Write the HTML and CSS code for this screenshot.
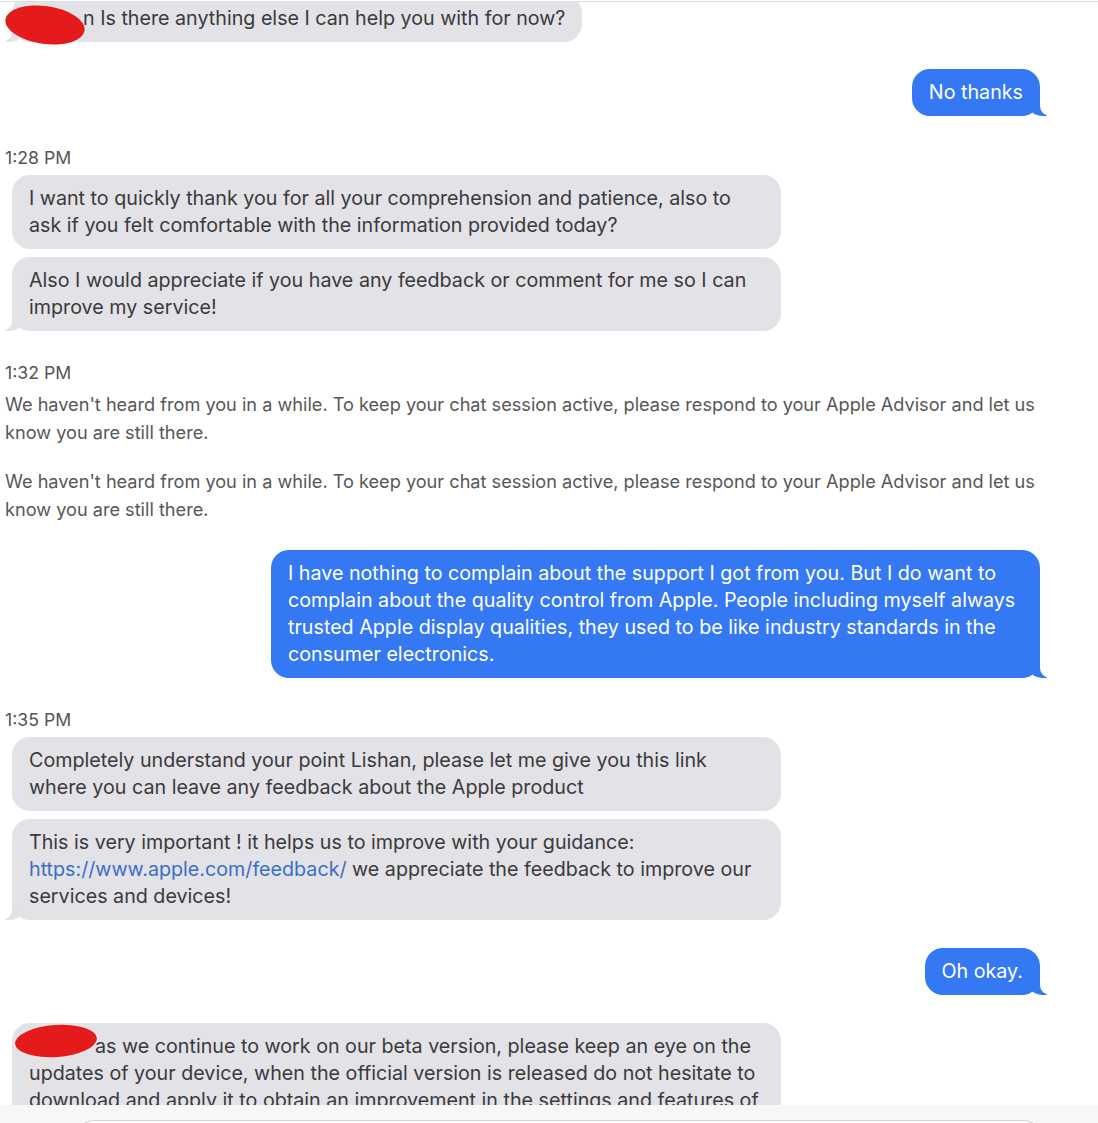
FILE: index.html
```html
<!DOCTYPE html>
<html lang="en">
<head>
    <meta charset="UTF-8" />
    <meta name="viewport" content="width=device-width, initial-scale=1" />
    <title>Chat transcript</title>
    <link rel="stylesheet" href="styles.css">
</head>
<body>
    <div class="topline"></div>

    <main class="chat">
        <div class="bubble them tail first">
            <span class="redact redact-top"></span>
            n Is there anything else I can help you with for now?
        </div>

        <div class="bubble me tail gap">No thanks</div>

        <div class="stamp">1:28 PM</div>
        <div class="bubble them wide">I want to quickly thank you for all your comprehension and patience, also to ask if you felt comfortable with the information provided today?</div>
        <div class="bubble them wide tail next">Also I would appreciate if you have any feedback or comment for me so I can improve my service!</div>

        <div class="stamp">1:32 PM</div>
        <p class="notice">We haven't heard from you in a while. To keep your chat session active, please respond to your Apple Advisor and let us know you are still there.</p>
        <p class="notice">We haven't heard from you in a while. To keep your chat session active, please respond to your Apple Advisor and let us know you are still there.</p>

        <div class="bubble me wide tail gap">I have nothing to complain about the support I got from you. But I do want to complain about the quality control from Apple. People including myself always trusted Apple display qualities, they used to be like industry standards in the consumer electronics.</div>

        <div class="stamp">1:35 PM</div>
        <div class="bubble them wide">Completely understand your point Lishan, please let me give you this link where you can leave any feedback about the Apple product</div>
        <div class="bubble them wide tail next">This is very important ! it helps us to improve with your guidance: <a href="#">https://www.apple.com/feedback/</a> we appreciate the feedback to improve our services and devices!</div>

        <div class="bubble me tail gap wider">Oh okay.</div>

        <div class="bubble them wide gap wider">
            <span class="redact redact-bottom"></span>
            <span class="name-gap"></span>as we continue to work on our beta version, please keep an eye on the updates of your device, when the official version is released do not hesitate to download and apply it to obtain an improvement in the settings and features of your device.
        </div>
    </main>

    <footer class="composer">
        <div class="input"></div>
    </footer>
</body>
</html>
```

FILE: styles.css
```css
/* chat transcript */
body {
    margin: 0;
    height: 1123px;
    overflow: hidden;
    display: flex;
    flex-direction: column;
    background: #fff;
    font-family: Inter, 'Noto Sans', sans-serif;
    color: #3a3a3c;
}
.topline {
    height: 1px;
    margin-top: 1px;
    background: #dcdcdc;
}
.chat {
    flex: 1;
    overflow: hidden;
    display: flex;
    flex-direction: column;
    padding: 0 58px 0 5px;
}
.bubble {
    position: relative;
    font-size: 19.7px;
    line-height: 27px;
    padding: 10px 17px;
    border-radius: 18px;
    box-sizing: border-box;
}
.bubble.them {
    align-self: flex-start;
    margin-left: 7px;
    background: #e2e2e7;
    color: #3a3a3c;
}
.bubble.me {
    align-self: flex-end;
    background: #3479f3;
    color: #fff;
    padding: 10px 17px;
}
.bubble.wide {
    width: 769px;
}
.bubble.first {
    margin-top: -7px;
    padding-left: 71px;
}
.gap { margin-top: 27px; }
.gap.wider { margin-top: 28px; }
.next { margin-top: 8px; }

/* tails */
.bubble.tail::before,
.bubble.tail::after {
    content: "";
    position: absolute;
    bottom: 0;
    height: 20px;
}
.bubble.them.tail::before {
    left: -7px;
    width: 20px;
    background: #e2e2e7;
    border-bottom-right-radius: 15px;
}
.bubble.them.tail::after {
    left: -10px;
    width: 10px;
    background: #fff;
    border-bottom-right-radius: 10px;
}
.bubble.me.tail::before {
    right: -7px;
    width: 20px;
    background: #3479f3;
    border-bottom-left-radius: 15px;
}
.bubble.me.tail::after {
    right: -10px;
    width: 10px;
    background: #fff;
    border-bottom-left-radius: 10px;
}

.stamp {
    margin-top: 30px;
    margin-bottom: 5px;
    font-size: 17.7px;
    line-height: 24px;
    color: #555;
}
.notice {
    margin: 0;
    font-size: 18.15px;
    line-height: 28px;
    color: #575757;
}
.notice + .notice { margin-top: 21px; }

a {
    color: #3a6fc8;
    text-decoration: none;
}

/* redaction marks */
.redact {
    position: absolute;
    background: #e51b1b;
    border-radius: 50%;
    z-index: 2;
}
.redact-top {
    left: -7px;
    top: 11px;
    width: 80px;
    height: 38px;
    transform: rotate(8deg);
}
.redact-bottom {
    left: 3px;
    top: 2px;
    width: 82px;
    height: 32px;
    transform: rotate(-4deg);
}
.name-gap {
    display: inline-block;
    width: 66px;
}

.composer {
    height: 18px;
    background: #f7f7f7;
    padding: 15px 55px 0 75px;
    box-sizing: border-box;
}
.input {
    height: 20px;
    border: 1px solid #d2d2d2;
    border-bottom: none;
    border-radius: 20px 20px 0 0;
    background: #fff;
}
```
